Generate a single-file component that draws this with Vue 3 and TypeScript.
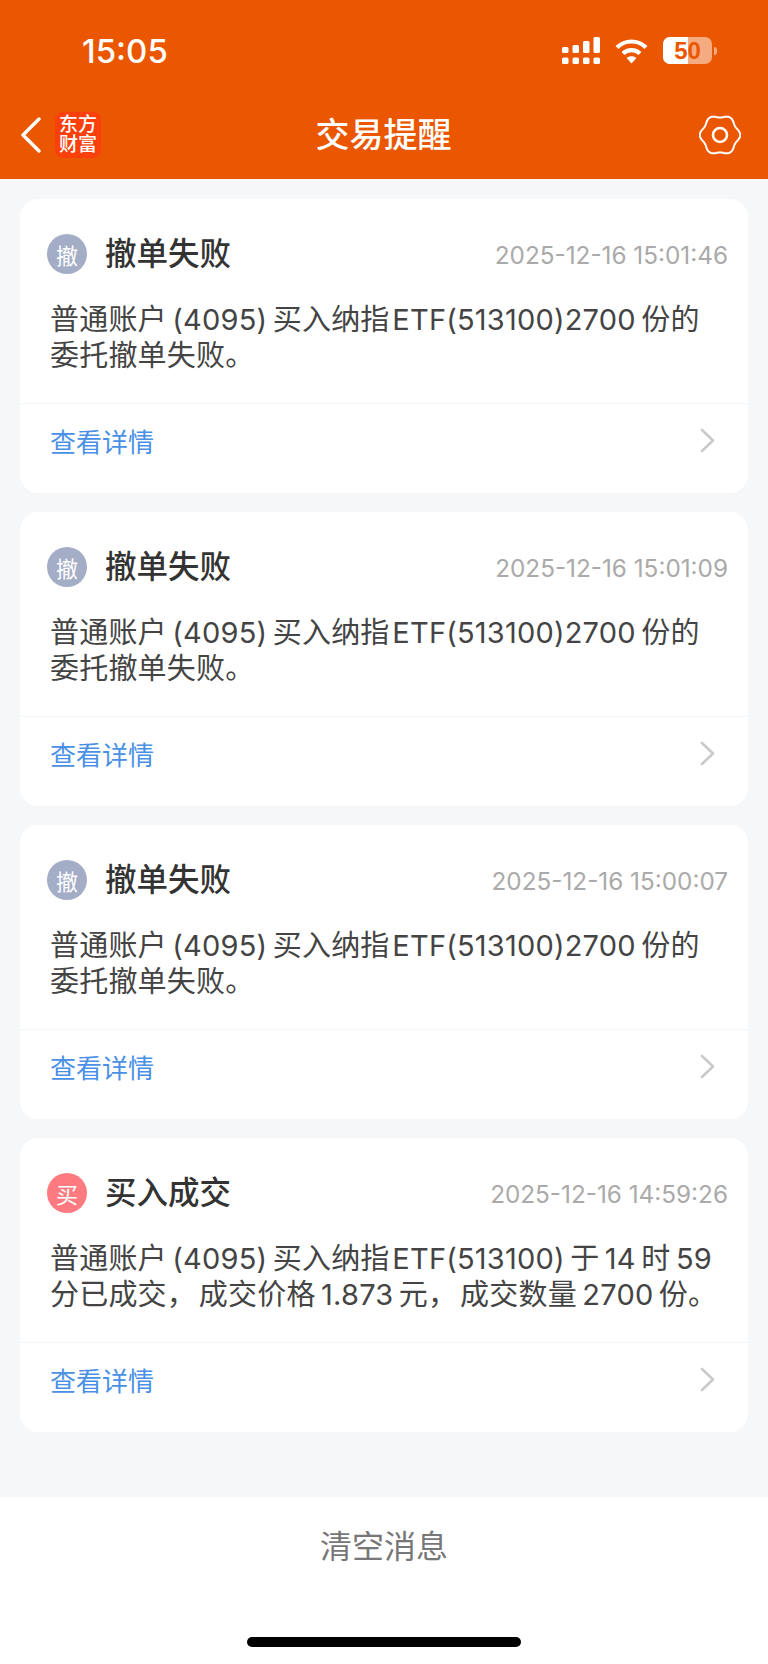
<script setup lang="ts">
interface Notice {
  badge: string;
  kind: string;
  title: string;
  time: string;
  lines: string[];
}

const cancelLines = [
  "普通账户\u2009(4095)\u2009买入纳指\u200aETF(513100)2700\u2009份的",
  "委托撤单失败。",
];

const notices: Notice[] = [
  { badge: "撤", kind: "grey", title: "撤单失败", time: "2025-12-16 15:01:46", lines: cancelLines },
  { badge: "撤", kind: "grey", title: "撤单失败", time: "2025-12-16 15:01:09", lines: cancelLines },
  { badge: "撤", kind: "grey", title: "撤单失败", time: "2025-12-16 15:00:07", lines: cancelLines },
  {
    badge: "买",
    kind: "red",
    title: "买入成交",
    time: "2025-12-16 14:59:26",
    lines: [
      "普通账户\u2009(4095)\u2009买入纳指\u200aETF(513100)\u2009于\u200914\u2009时\u200959",
      "分已成交，\u200a成交价格\u20091.873\u2009元，\u200a成交数量\u20092700\u2009份。",
    ],
  },
];

// 齿轮外轮廓：六瓣波浪
function gearOutline(): string {
  const pts: string[] = [];
  for (let i = 0; i < 120; i++) {
    const a = (i / 120) * Math.PI * 2;
    const r = 18.8 + 1.4 * Math.cos(6 * a);
    pts.push(`${(21 + r * Math.cos(a)).toFixed(2)} ${(21 + r * Math.sin(a)).toFixed(2)}`);
  }
  return "M" + pts.join("L") + "Z";
}
const gearPath = gearOutline();
</script>

<template>
  <div class="page">
    <header class="top">
      <div class="status">
        <span class="clock">15:05</span>
        <div class="status-icons">
          <svg class="signal" width="38" height="27" viewBox="0 0 38 27" fill="#fff">
            <rect x="0" y="10" width="6.5" height="6" rx="1.5" />
            <rect x="10.5" y="8" width="6.5" height="8" rx="1.5" />
            <rect x="21" y="4" width="6.5" height="12" rx="1.5" />
            <rect x="31.5" y="0" width="6.5" height="16" rx="1.5" />
            <rect x="0" y="20.5" width="6.5" height="6.5" rx="1.5" />
            <rect x="10.5" y="20.5" width="6.5" height="6.5" rx="1.5" />
            <rect x="21" y="20.5" width="6.5" height="6.5" rx="1.5" />
            <rect x="31.5" y="20.5" width="6.5" height="6.5" rx="1.5" />
          </svg>
          <svg class="wifi" width="33" height="26" viewBox="0 0 33 26" fill="none" stroke="#fff" stroke-width="4.2">
            <path d="M2 9.5C10 1.5 23 1.5 31 9.5" />
            <path d="M8 15.5C12.5 11 20.5 11 25 15.5" />
            <path d="M11.6 20L16.5 25.4L21.4 20C18.6 17.6 14.4 17.6 11.6 20Z" fill="#fff" stroke="none" />
          </svg>
          <div class="battery">
            <div class="battery-body">
              <span class="battery-fill"></span>
              <span class="battery-num">50</span>
            </div>
            <span class="battery-tip"></span>
          </div>
        </div>
      </div>
      <nav class="nav">
        <div class="nav-left">
          <svg width="22" height="36" viewBox="0 0 22 36" fill="none" stroke="#fff" stroke-width="3.4" stroke-linecap="round" stroke-linejoin="round">
            <path d="M19 2L3 18L19 34" />
          </svg>
          <div class="logo">
            <span>东方</span>
            <span>财富</span>
          </div>
        </div>
        <div class="nav-title">交易提醒</div>
        <div class="nav-right">
          <svg width="42" height="42" viewBox="0 0 42 42" fill="none" stroke="#fff" stroke-width="2">
            <path :d="gearPath" stroke-linejoin="round" />
            <circle cx="21" cy="21" r="7" stroke-width="2.6" />
          </svg>
        </div>
      </nav>
    </header>

    <main class="list">
      <section v-for="item in notices" :key="item.time" class="card">
        <div class="card-head">
          <span class="badge" :class="item.kind">{{ item.badge }}</span>
          <span class="card-title">{{ item.title }}</span>
          <span class="card-time">{{ item.time }}</span>
        </div>
        <div class="card-body">
          <div v-for="line in item.lines" :key="line">{{ line }}</div>
        </div>
        <div class="card-foot">
          <span class="more">查看详情</span>
          <svg width="15" height="25" viewBox="0 0 15 25" fill="none" stroke="#cacaca" stroke-width="2.6" stroke-linecap="round" stroke-linejoin="round">
            <path d="M2 2L13 12.5L2 23" />
          </svg>
        </div>
      </section>
    </main>

    <footer class="bottom">
      <div class="clear">清空消息</div>
      <div class="home-bar"></div>
    </footer>
  </div>
</template>

<style>
html,
body {
  margin: 0;
  background: #f6f7f9;
}
</style>

<style scoped>
.page {
  width: 768px;
  height: 1664px;
  display: flex;
  flex-direction: column;
  background: #f6f7f9;
  font-family: Inter, "Noto Sans CJK SC", sans-serif;
  overflow: hidden;
}

.top {
  height: 179px;
  background: #eb5600;
  color: #fff;
  flex-shrink: 0;
}

.status {
  height: 101px;
  padding: 0 51px 0 82px;
  display: flex;
  justify-content: space-between;
  box-sizing: border-box;
}

.clock {
  margin-top: 32px;
  font-size: 33px;
  line-height: 38px;
  font-weight: 500;
}

.status-icons {
  margin-top: 37px;
  display: flex;
  align-items: flex-start;
}

.wifi {
  margin: 1px 15px 0 15px;
}

.battery {
  display: flex;
  align-items: center;
  height: 27px;
}

.battery-body {
  position: relative;
  width: 49px;
  height: 27px;
  border-radius: 7px;
  overflow: hidden;
  background: rgba(255, 255, 255, 0.5);
}

.battery-fill {
  position: absolute;
  left: 0;
  top: 0;
  bottom: 0;
  width: 25px;
  background: #fff;
}

.battery-num {
  position: relative;
  display: block;
  text-align: center;
  font-family: "Liberation Sans", sans-serif;
  font-size: 24px;
  line-height: 27px;
  font-weight: 700;
  color: #eb5600;
}

.battery-tip {
  width: 3px;
  height: 8px;
  margin-left: 2px;
  border-radius: 0 3px 3px 0;
  background: rgba(255, 255, 255, 0.5);
}

.nav {
  height: 68px;
  padding: 0 27px 0 20px;
  display: grid;
  grid-template-columns: 1fr auto 1fr;
  align-items: center;
}

.nav-left {
  display: flex;
  align-items: center;
  gap: 13px;
}

.logo {
  width: 46px;
  height: 46px;
  border-radius: 8px;
  background: #fb400c;
  display: flex;
  flex-direction: column;
  align-items: center;
  justify-content: center;
  font-size: 19px;
  line-height: 20px;
  font-weight: 500;
}

.nav-title {
  font-size: 34px;
  line-height: 44px;
  font-weight: 500;
  margin-left: 6px;
}

.nav-right {
  display: flex;
  justify-content: flex-end;
}

.list {
  flex: 1;
  padding: 20px 20px 0;
  display: flex;
  flex-direction: column;
  gap: 19px;
}

.card {
  height: 294px;
  background: #fff;
  border-radius: 18px;
  box-sizing: border-box;
}

.card-head {
  height: 102px;
  padding: 35px 20px 0 27px;
  box-sizing: border-box;
  display: flex;
  align-items: flex-start;
}

.badge {
  width: 40px;
  height: 40px;
  border-radius: 50%;
  display: flex;
  align-items: center;
  justify-content: center;
  color: #fff;
  font-size: 22px;
  flex-shrink: 0;
}

.badge.grey {
  background: #a3adc6;
}

.badge.red {
  background: #fd7b80;
}

.card-title {
  margin-left: 18px;
  font-size: 31.5px;
  line-height: 40px;
  font-weight: 500;
  color: #333;
}

.card-time {
  margin-left: auto;
  margin-top: 1px;
  font-size: 24.3px;
  line-height: 40px;
  color: #aaa;
}

.card-body {
  padding: 1px 20px 0 30px;
  height: 101px;
  font-size: 29px;
  line-height: 36px;
  letter-spacing: 0.2px;
  color: #444;
  white-space: nowrap;
  border-bottom: 1px solid #f2f5f9;
}

.card-foot {
  height: 90px;
  padding: 0 33px 18px 30px;
  box-sizing: border-box;
  display: flex;
  align-items: center;
  justify-content: space-between;
}

.more {
  font-size: 26px;
  color: #4a90e6;
}

.bottom {
  position: relative;
  height: 167px;
  flex-shrink: 0;
  background: #fff;
}

.clear {
  padding-top: 29px;
  text-align: center;
  font-size: 32px;
  line-height: 42px;
  color: #777;
}

.home-bar {
  position: absolute;
  left: 247px;
  bottom: 17px;
  width: 274px;
  height: 10px;
  border-radius: 5px;
  background: #000;
}
</style>
